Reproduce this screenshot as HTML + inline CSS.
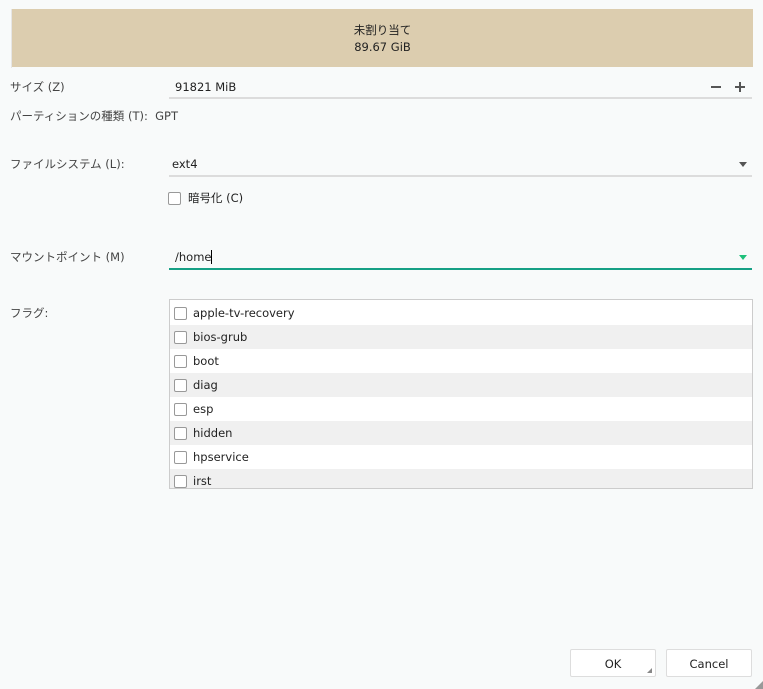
<!DOCTYPE html>
<html><head><meta charset="utf-8"><style>
body{margin:0;width:763px;height:689px;background:#f8fafa;font-family:"DejaVu Sans","Noto Sans CJK JP",sans-serif;font-size:11.5px;color:#222;position:relative;overflow:hidden}
.a{position:absolute;white-space:nowrap;line-height:14px}
.lbl{color:#444}
.ul{position:absolute;left:169px;width:583px;height:2px;background:#dcdcdc}
.cb{position:absolute;width:11px;height:11px;border:1px solid #999;border-radius:2px;background:#fff}
.row{position:absolute;left:170px;width:582px;height:24px}
.row .cb{left:4px;top:6px}
.row span{position:absolute;left:23px;top:5px;line-height:14px}
.btn{position:absolute;top:649px;width:86px;height:28px;background:#fff;border:1px solid #ddd;border-radius:2px;text-align:center;line-height:28px;box-sizing:border-box}
.bar{position:absolute;background:#555}
</style></head><body>
<div style="position:absolute;left:11px;top:9px;width:1px;height:59px;background:#e6e6e6"></div>
<div style="position:absolute;left:12px;top:9px;width:741px;height:58px;background:#dccdaf"></div>
<div class="a" style="left:12px;width:741px;text-align:center;top:23px">未割り当て</div>
<div class="a" style="left:12px;width:741px;text-align:center;top:40px">89.67 GiB</div>

<div class="a lbl" style="left:10px;top:80px">サイズ (Z)</div>
<div class="a" style="left:175px;top:80px">91821 MiB</div>
<div class="bar" style="left:711px;top:86px;width:10px;height:2px"></div>
<div class="bar" style="left:735px;top:86px;width:10px;height:2px"></div>
<div class="bar" style="left:739px;top:82px;width:2px;height:10px"></div>
<div class="ul" style="top:97px;width:583px"></div>

<div class="a lbl" style="left:10px;top:109px">パーティションの種類 (T):&nbsp; GPT</div>

<div class="a lbl" style="left:10px;top:157px">ファイルシステム (L):</div>
<div class="a" style="left:172px;top:157px">ext4</div>
<div style="position:absolute;left:739px;top:162px;border-left:4px solid transparent;border-right:4px solid transparent;border-top:5px solid #555"></div>
<div class="ul" style="top:175px"></div>

<div class="cb" style="left:168px;top:192px"></div>
<div class="a" style="left:188px;top:191px">暗号化 (C)</div>

<div class="a lbl" style="left:10px;top:250px">マウントポイント (M)</div>
<div class="a" style="left:175px;top:250px">/home<span style="display:inline-block;width:1px;height:14px;background:#000;vertical-align:top"></span></div>
<div style="position:absolute;left:739px;top:255px;border-left:4px solid transparent;border-right:4px solid transparent;border-top:5px solid #1ec07a"></div>
<div class="ul" style="top:268px;background:#16a085"></div>

<div class="a lbl" style="left:10px;top:306px">フラグ:</div>
<div style="position:absolute;left:169px;top:299px;width:582px;height:188px;border:1px solid #ccc;background:#fff;overflow:hidden">
<div class="row" style="left:0;top:1px;background:#fff"><div class="cb"></div><span>apple-tv-recovery</span></div>
<div class="row" style="left:0;top:25px;background:#f0f0f0"><div class="cb"></div><span>bios-grub</span></div>
<div class="row" style="left:0;top:49px;background:#fff"><div class="cb"></div><span>boot</span></div>
<div class="row" style="left:0;top:73px;background:#f0f0f0"><div class="cb"></div><span>diag</span></div>
<div class="row" style="left:0;top:97px;background:#fff"><div class="cb"></div><span>esp</span></div>
<div class="row" style="left:0;top:121px;background:#f0f0f0"><div class="cb"></div><span>hidden</span></div>
<div class="row" style="left:0;top:145px;background:#fff"><div class="cb"></div><span>hpservice</span></div>
<div class="row" style="left:0;top:169px;background:#f0f0f0"><div class="cb"></div><span>irst</span></div>
</div>

<div class="btn" style="left:570px">OK<div style="position:absolute;right:3px;bottom:3px;border-left:5px solid transparent;border-bottom:5px solid #888"></div></div>
<div class="btn" style="left:666px">Cancel</div>
<div style="position:absolute;right:0;bottom:0;border-left:8px solid transparent;border-bottom:8px solid #999"></div>
</body></html>
